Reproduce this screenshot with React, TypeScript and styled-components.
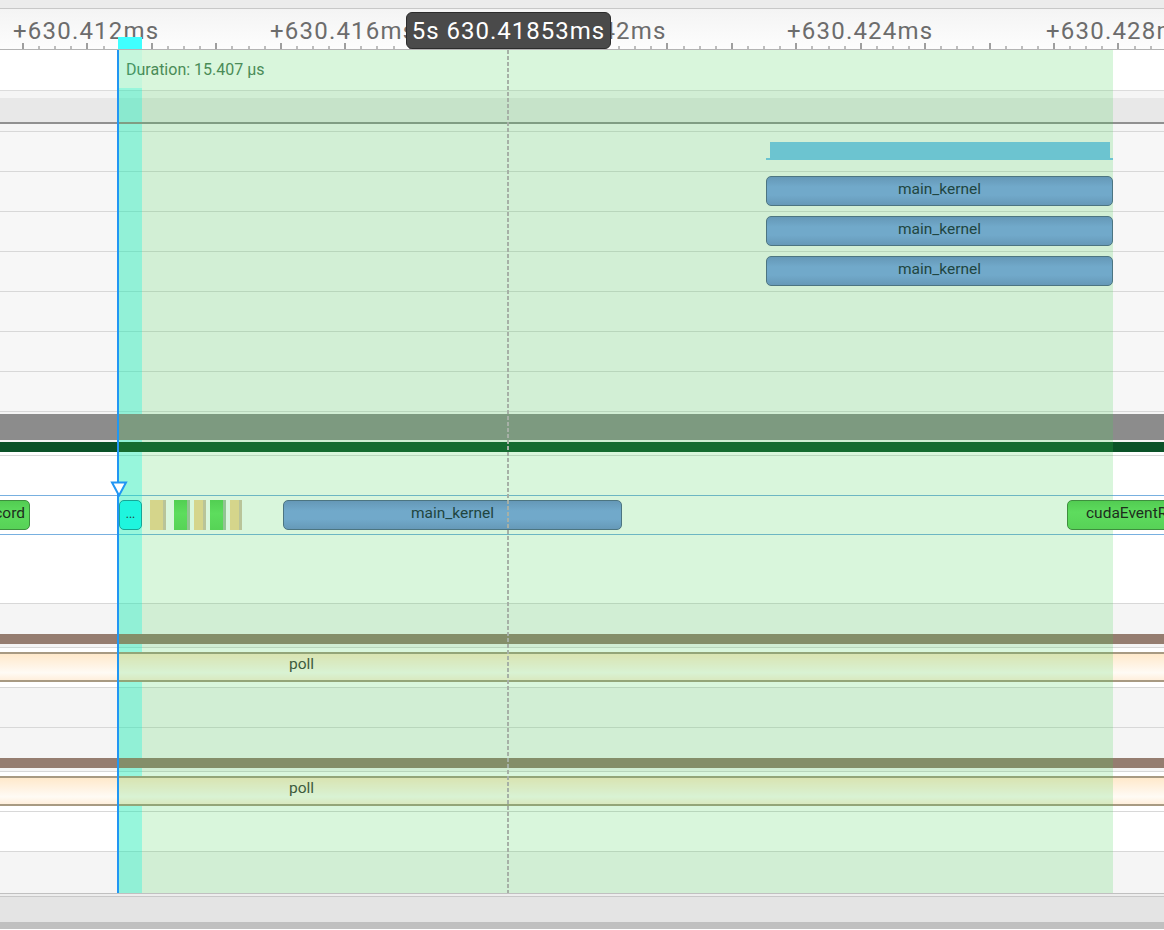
import styled, { createGlobalStyle } from 'styled-components'

const GlobalStyle = createGlobalStyle`
  html, body {
    margin: 0;
    padding: 0;
    background: #fff;
  }
  body {
    font-family: Roboto, 'Noto Sans', sans-serif;
    overflow: hidden;
  }
`

const SRoot = styled.div`
  width: 1164px;
  height: 930px;
  overflow: hidden;
  display: flex;
  flex-direction: column;
  background: #fff;
`

const STopStrip = styled.div`
  flex: none;
  height: 8px;
  background: #ececec;
  border-bottom: 1px solid #c8c8c8;
`

const SRuler = styled.div`
  position: relative;
  flex: none;
  height: 40px;
  background: linear-gradient(#f4f4f4, #fdfdfd);
  border-bottom: 1px solid #b4b4b4;
`

const SRulerLabel = styled.span`
  position: absolute;
  top: 10px;
  font-size: 24px;
  line-height: 24px;
  letter-spacing: 1.2px;
  color: #6c6c6c;
  white-space: nowrap;
`

const STick = styled.div<{ $major: boolean }>`
  position: absolute;
  bottom: 0;
  width: 2px;
  height: ${(p) => (p.$major ? 6 : 3)}px;
  background: ${(p) => (p.$major ? '#9f9f9f' : '#bdbdbd')};
`

const SCursorMark = styled.div`
  position: absolute;
  left: 118px;
  bottom: 0;
  width: 24px;
  height: 12px;
  background: #40ffff;
`

const STooltip = styled.div`
  position: absolute;
  left: 406px;
  top: 3px;
  box-sizing: border-box;
  width: 205px;
  height: 37px;
  display: flex;
  align-items: center;
  justify-content: center;
  padding-top: 1px;
  background: #4a4a4a;
  border: 1px solid #2c2c2c;
  border-radius: 6px;
  color: #fff;
  font-size: 24px;
  letter-spacing: 1px;
  white-space: nowrap;
`

const STracks = styled.div`
  position: relative;
  flex: none;
  display: flex;
  flex-direction: column;
  isolation: isolate;
`

const SRow = styled.div<{ $h: number; $bg?: string; $top?: string; $bottom?: string }>`
  position: relative;
  flex: none;
  height: ${(p) => p.$h}px;
  background: ${(p) => p.$bg ?? '#fff'};
  border-top: ${(p) => (p.$top ? `1px solid ${p.$top}` : 'none')};
  border-bottom: ${(p) => (p.$bottom ? `1px solid ${p.$bottom}` : 'none')};
`

const SBand = styled.div<{ $h: number; $color: string }>`
  position: relative;
  z-index: 2;
  flex: none;
  height: ${(p) => p.$h}px;
  background: ${(p) => p.$color};
`

const SDuration = styled.div`
  padding: 12px 0 0 126px;
  font-size: 16px;
  line-height: 16px;
  color: #4d7a59;
`

const SPoll = styled.div`
  position: relative;
  z-index: 2;
  flex: none;
  display: flex;
  align-items: center;
  padding: 0 0 5px 289px;
  height: 21px;
  border-top: 2px solid #a89a82;
  border-bottom: 2px solid #a89a82;
  background: linear-gradient(#ffe9cb, #fff5e8 50%, #fffbf5 72%, #ffefdc);
  font-size: 15.5px;
  line-height: 1;
  color: #3d3c39;
`

const SCyanColumn = styled.div<{ $faint?: boolean }>`
  position: absolute;
  z-index: 1;
  left: 119px;
  width: 23px;
  top: ${(p) => (p.$faint ? 0 : 38)}px;
  height: ${(p) => (p.$faint ? 38 : 805)}px;
  background: ${(p) => (p.$faint ? 'rgba(0, 255, 255, 0.09)' : 'rgba(0, 255, 255, 0.32)')};
  pointer-events: none;
`

const SAreaSelection = styled.div`
  position: absolute;
  z-index: 3;
  left: 118px;
  top: 0;
  width: 995px;
  height: 843px;
  background: rgba(65, 210, 80, 0.2);
  pointer-events: none;
`

const SDashedLine = styled.div`
  position: absolute;
  z-index: 5;
  left: 507px;
  top: 0;
  width: 1.5px;
  height: 843px;
  background: repeating-linear-gradient(#a6b0a6 0 4px, transparent 4px 6px);
`

const SCursorLine = styled.div`
  position: absolute;
  z-index: 6;
  left: 117px;
  top: 0;
  width: 2px;
  height: 843px;
  background: #2196f3;
`

const SMarker = styled.svg`
  position: absolute;
  z-index: 6;
  left: 110px;
  top: 431px;
`

type SliceKind = 'kernel' | 'api' | 'hit' | 'tinyYellow' | 'tinyGreen'

const sliceLook: Record<SliceKind, string> = {
  kernel: `
    border: 1.5px solid #4c7581;
    background: linear-gradient(#6598b7, #71a9ca 35%, #71a9ca 65%, #6699b8);
    color: #1f4540;
  `,
  api: `
    border: 1.5px solid #3e8f3e;
    background: linear-gradient(#52cc52, #5edc5e 40%, #57d257);
    color: #1d2e1d;
  `,
  hit: `
    border: 1.5px solid #17a595;
    background: #1ff5de;
    color: #2a3a38;
    font-size: 12px;
  `,
  tinyYellow: `
    border-radius: 0;
    border-right: 3px solid #b9c499;
    background: #d5d58b;
  `,
  tinyGreen: `
    border-radius: 0;
    border-right: 3px solid #93c493;
    background: linear-gradient(#52cf52, #5ddd5d 45%, #56d356);
  `,
}

const SSlice = styled.div<{ $kind: SliceKind; $align?: 'left' | 'center' | 'right' }>`
  position: absolute;
  z-index: 4;
  top: 4px;
  height: 30px;
  box-sizing: border-box;
  display: flex;
  align-items: center;
  justify-content: ${(p) => (p.$align === 'left' ? 'flex-start' : p.$align === 'right' ? 'flex-end' : 'center')};
  padding: 0 4px 3px;
  border-radius: 5px;
  overflow: hidden;
  white-space: nowrap;
  font-size: 15.5px;
  line-height: 1;
  ${(p) => sliceLook[p.$kind]}
`

const SSummaryBar = styled.div`
  position: absolute;
  z-index: 4;
  left: 770px;
  top: 10px;
  width: 340px;
  height: 16px;
  background: #6cc4d0;
  &::after {
    content: '';
    position: absolute;
    left: -4px;
    right: -3px;
    bottom: -2px;
    height: 2px;
    background: #6cc4d0;
  }
`

const SBottom = styled.div`
  flex: none;
  height: 26px;
  background: #e4e4e4;
  border-top: 1px solid #c0c0c0;
  box-shadow: inset 0 2px 0 #ededed, inset 0 3px 0 #c8c8c8;
  padding-top: 2px;
  border-bottom: 7px solid #c0c0c0;
`

const ticks = Array.from({ length: 72 }, (_, i) => ({ x: 22 + i * 16.11, major: i % 4 === 0 })).filter(
  (t) => t.x < 1164,
)

const labels = [
  { x: 13, text: '+630.412ms' },
  { x: 270, text: '+630.416ms' },
  { x: 535, text: '+630.42ms' },
  { x: 787, text: '+630.424ms' },
  { x: 1046, text: '+630.428ms' },
]

const tinySlices: { x: number; w: number; kind: SliceKind }[] = [
  { x: 150, w: 16, kind: 'tinyYellow' },
  { x: 174, w: 16, kind: 'tinyGreen' },
  { x: 194, w: 12, kind: 'tinyYellow' },
  { x: 210, w: 16, kind: 'tinyGreen' },
  { x: 230, w: 12, kind: 'tinyYellow' },
]

const Ruler = () => (
  <SRuler>
    {ticks.map((t) => (
      <STick key={t.x} $major={t.major} style={{ left: t.x }} />
    ))}
    {labels.map((l) => (
      <SRulerLabel key={l.text} style={{ left: l.x }}>
        {l.text}
      </SRulerLabel>
    ))}
    <SCursorMark />
    <STooltip>5s 630.41853ms</STooltip>
  </SRuler>
)

const KernelRow = () => (
  <SRow $h={39} $bg="#f7f7f7" $top="#d8d8d8">
    <SSlice $kind="kernel" style={{ left: 766, width: 347 }}>
      main_kernel
    </SSlice>
  </SRow>
)

const ThreadGroup = () => (
  <>
    <SRow $h={30} $bg="#f5f5f5" />
    <SBand $h={10} $color="#957d70" />
    <SRow $h={3} $bg="#f5f5f5" $bottom="#d8d8d8" />
    <SRow $h={4} />
    <SPoll>poll</SPoll>
    <SRow $h={5} $bottom="#d8d8d8" />
  </>
)

export default function App() {
  return (
    <>
      <GlobalStyle />
      <SRoot>
        <STopStrip />
        <Ruler />
        <STracks>
          <SRow $h={40} $bottom="#dcdcdc">
            <SDuration>Duration: 15.407 μs</SDuration>
          </SRow>
          <SRow $h={7} $bg="#f5f5f5" />
          <SRow $h={24} $bg="#e8e8e8" />
          <SBand $h={2} $color="#909090" />
          <SRow $h={7} $bg="#f5f5f5" />

          <SRow $h={39} $bg="#f7f7f7" $top="#d8d8d8">
            <SSummaryBar />
          </SRow>
          <KernelRow />
          <KernelRow />
          <KernelRow />
          <SRow $h={39} $bg="#f7f7f7" $top="#d8d8d8" />
          <SRow $h={39} $bg="#f7f7f7" $top="#d8d8d8" />
          <SRow $h={39} $bg="#f7f7f7" $top="#d8d8d8" $bottom="#d8d8d8" />

          <SRow $h={2} $bg="#f5f5f5" />
          <SBand $h={26} $color="#8c8c8c" />
          <SRow $h={2} $bg="#f5f5f5" />
          <SBand $h={10} $color="#0b5228" />
          <SRow $h={3} />
          <SRow $h={39} $top="#d8d8d8" />
          <SRow $h={38} $top="#78b0e0" $bottom="#78b0e0">
            <SSlice $kind="api" $align="right" style={{ left: -40, width: 70 }}>
              cord
            </SSlice>
            <SSlice $kind="hit" style={{ left: 119, width: 23 }}>
              ...
            </SSlice>
            {tinySlices.map((s) => (
              <SSlice key={s.x} $kind={s.kind} style={{ left: s.x, width: s.w }} />
            ))}
            <SSlice $kind="kernel" style={{ left: 283, width: 339 }}>
              main_kernel
            </SSlice>
            <SSlice $kind="api" $align="left" style={{ left: 1067, width: 200, paddingLeft: 18 }}>
              cudaEventRecord
            </SSlice>
          </SRow>
          <SRow $h={68} $bottom="#d8d8d8" />

          <ThreadGroup />
          <SRow $h={39} $bg="#f5f5f5" $bottom="#d8d8d8" />
          <ThreadGroup />
          <SRow $h={39} $bottom="#d8d8d8" />
          <SRow $h={41} $bg="#f5f5f5" />

          <SCyanColumn $faint />
          <SCyanColumn />
          <SAreaSelection />
          <SDashedLine />
          <SCursorLine />
          <SMarker width="18" height="16" viewBox="0 0 18 16">
            <path d="M2 1.5 H16 L9 14.5 Z" fill="#ffffff" stroke="#2196f3" strokeWidth="2" strokeLinejoin="miter" />
          </SMarker>
        </STracks>
        <SBottom />
      </SRoot>
    </>
  )
}
